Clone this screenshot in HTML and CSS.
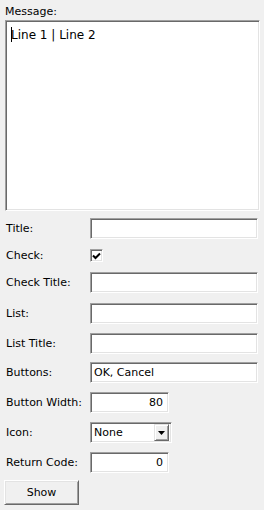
FILE: index.html
```html
<!DOCTYPE html>
<html>
<head>
<meta charset="utf-8">
<link rel="stylesheet" href="styles.css">
</head>
<body>
<div class="app">
  <div class="msg-label">Message:</div>
  <div class="memo"><span class="caret"></span>Line 1 | Line 2</div>
  <div class="form">
    <div class="row"><span class="lbl">Title:</span><div class="field wide"></div></div>
    <div class="row check-row"><span class="lbl">Check:</span>
      <div class="checkbox"><svg width="9" height="9" viewBox="0 0 9 9"><path d="M1 3.5 L3.5 6 L8 1.5" fill="none" stroke="#000" stroke-width="2"/></svg></div>
    </div>
    <div class="row loose"><span class="lbl">Check Title:</span><div class="field wide"></div></div>
    <div class="row loose"><span class="lbl">List:</span><div class="field wide"></div></div>
    <div class="row"><span class="lbl">List Title:</span><div class="field wide"></div></div>
    <div class="row tight"><span class="lbl">Buttons:</span><div class="field wide">OK, Cancel</div></div>
    <div class="row"><span class="lbl">Button Width:</span><div class="field short num">80</div></div>
    <div class="row"><span class="lbl">Icon:</span>
      <div class="field combo"><span class="combo-text">None</span><span class="drop"><svg width="7" height="4" viewBox="0 0 7 4"><path d="M0 0 H7 L3.5 4 Z" fill="#000"/></svg></span></div>
    </div>
    <div class="row"><span class="lbl">Return Code:</span><div class="field short num">0</div></div>
    <div class="btn-row"><button class="btn">Show</button></div>
  </div>
</div>
</body>
</html>
```

FILE: styles.css
```css
html, body {
  margin: 0;
  padding: 0;
  background: #f0f0f0;
}
body {
  font-family: "DejaVu Sans", "Liberation Sans", sans-serif;
  font-size: 11px;
  color: #000;
  width: 264px;
  height: 510px;
  overflow: hidden;
}
.app {
  padding: 5px 4px 0 5px;
}
.msg-label {
  height: 14px;
  line-height: 14px;
  margin-bottom: 1px;
}
.field, .memo, .checkbox {
  box-sizing: border-box;
  background: #fff;
  border: 1px solid;
  border-color: #a0a0a0 #fff #fff #a0a0a0;
  box-shadow: inset 1px 1px #696969, inset -1px -1px #e3e3e3;
}
.memo {
  width: 255px;
  height: 191px;
  padding: 6px 4px 0 5px;
  font-size: 12px;
  line-height: 16px;
  position: relative;
}
.caret {
  display: inline-block;
  width: 1px;
  height: 15px;
  background: #000;
  vertical-align: -3px;
  margin-right: -1px;
}
.form {
  display: flex;
  flex-direction: column;
  gap: 9px;
  margin-top: 7px;
}
.row {
  display: flex;
  align-items: center;
  height: 21px;
  padding-left: 1px;
}
.row.loose { margin-top: 1px; }
.row.tight { margin-top: -1px; }
.check-row {
  height: 13px;
  margin-top: 1px;
}
.lbl {
  width: 84px;
  flex: none;
  white-space: nowrap;
}
.field {
  height: 21px;
  line-height: 19px;
  padding: 0 4px 0 3px;
  white-space: nowrap;
}
.wide { width: 168px; }
.short { width: 79px; }
.num { text-align: right; padding-right: 5px; }
.checkbox {
  width: 13px;
  height: 13px;
  display: flex;
  align-items: center;
  justify-content: center;
  padding-top: 1px;
}
.checkbox svg { display: block; }
.combo {
  width: 82px;
  display: flex;
  align-items: center;
  padding: 0 2px 0 3px;
}
.combo-text { flex: 1; }
.drop {
  box-sizing: border-box;
  width: 15px;
  height: 17px;
  background: #f0f0f0;
  border: 1px solid;
  border-color: #e3e3e3 #696969 #696969 #e3e3e3;
  box-shadow: inset 1px 1px #fff, inset -1px -1px #a0a0a0;
  display: flex;
  align-items: center;
  justify-content: center;
}
.drop svg { display: block; }
.btn-row {
  margin-top: -2px;
}
.btn {
  box-sizing: border-box;
  width: 75px;
  height: 25px;
  margin-left: -1px;
  font-family: "DejaVu Sans", "Liberation Sans", sans-serif;
  font-size: 11px;
  color: #000;
  background: #f0f0f0;
  border: 1px solid;
  border-color: #fff #696969 #696969 #fff;
  box-shadow: inset 1px 1px #e3e3e3, inset -1px -1px #a0a0a0;
  padding: 0;
}
```
